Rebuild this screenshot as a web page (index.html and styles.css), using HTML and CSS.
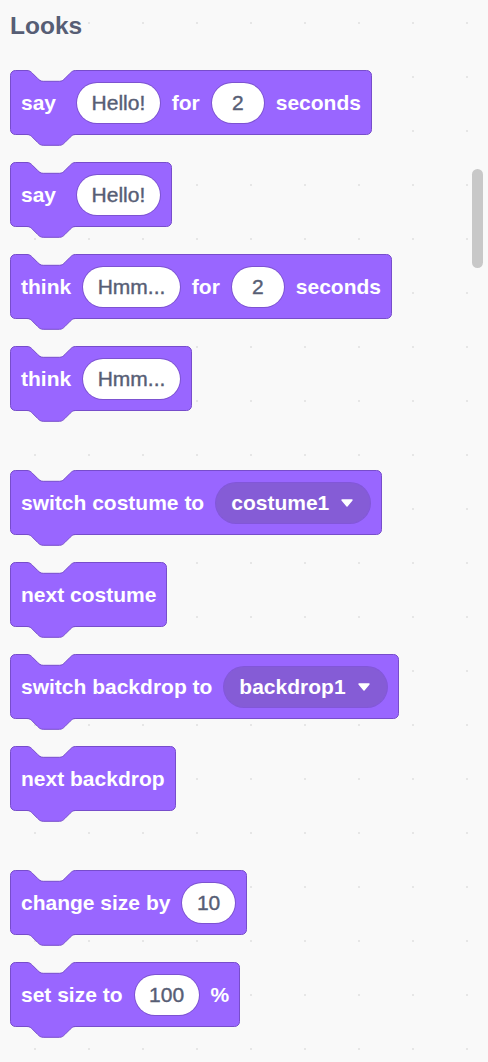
FILE: index.html
```html
<!DOCTYPE html>
<html lang="en">
<head>
<meta charset="utf-8">
<title>Looks</title>
<link rel="stylesheet" href="styles.css">
</head>
<body>
<svg class="defs" width="0" height="0" aria-hidden="true">
  <defs>
    <path id="nf" d="M1,0 V1.5 c2.7,0 4.05,1.35 5.4,2.7 l5.4,5.4 c1.35,1.35 2.7,2.7 5.4,2.7 h16.2 c2.7,0 4.05,-1.35 5.4,-2.7 l5.4,-5.4 c1.35,-1.35 2.7,-2.7 5.4,-2.7 V0 Z"/>
    <path id="nl" d="M1,1.5 c2.7,0 4.05,1.35 5.4,2.7 l5.4,5.4 c1.35,1.35 2.7,2.7 5.4,2.7 h16.2 c2.7,0 4.05,-1.35 5.4,-2.7 l5.4,-5.4 c1.35,-1.35 2.7,-2.7 5.4,-2.7"/>
    <path id="arr" d="M1,1 H11 L6,7 Z"/>
  </defs>
</svg>

<div class="flyout">
  <div class="category">Looks</div>
  <div class="stack">

    <div class="block">
      <svg class="notch top"><use class="nf" href="#nf"/><use class="nl" href="#nl"/></svg>
      <span class="label wide">say</span>
      <span class="input">Hello!</span>
      <span class="label">for</span>
      <span class="input">2</span>
      <span class="label">seconds</span>
      <svg class="notch bottom"><use class="nf" href="#nf"/><use class="nl" href="#nl"/></svg>
    </div>

    <div class="block">
      <svg class="notch top"><use class="nf" href="#nf"/><use class="nl" href="#nl"/></svg>
      <span class="label wide">say</span>
      <span class="input">Hello!</span>
      <svg class="notch bottom"><use class="nf" href="#nf"/><use class="nl" href="#nl"/></svg>
    </div>

    <div class="block">
      <svg class="notch top"><use class="nf" href="#nf"/><use class="nl" href="#nl"/></svg>
      <span class="label">think</span>
      <span class="input">Hmm...</span>
      <span class="label">for</span>
      <span class="input">2</span>
      <span class="label">seconds</span>
      <svg class="notch bottom"><use class="nf" href="#nf"/><use class="nl" href="#nl"/></svg>
    </div>

    <div class="block">
      <svg class="notch top"><use class="nf" href="#nf"/><use class="nl" href="#nl"/></svg>
      <span class="label">think</span>
      <span class="input">Hmm...</span>
      <svg class="notch bottom"><use class="nf" href="#nf"/><use class="nl" href="#nl"/></svg>
    </div>

    <div class="block group-start">
      <svg class="notch top"><use class="nf" href="#nf"/><use class="nl" href="#nl"/></svg>
      <span class="label">switch costume to</span>
      <span class="dropdown"><span>costume1</span><svg class="arrow" viewBox="0 0 12 8"><use href="#arr"/></svg></span>
      <svg class="notch bottom"><use class="nf" href="#nf"/><use class="nl" href="#nl"/></svg>
    </div>

    <div class="block">
      <svg class="notch top"><use class="nf" href="#nf"/><use class="nl" href="#nl"/></svg>
      <span class="label">next costume</span>
      <svg class="notch bottom"><use class="nf" href="#nf"/><use class="nl" href="#nl"/></svg>
    </div>

    <div class="block">
      <svg class="notch top"><use class="nf" href="#nf"/><use class="nl" href="#nl"/></svg>
      <span class="label">switch backdrop to</span>
      <span class="dropdown"><span>backdrop1</span><svg class="arrow" viewBox="0 0 12 8"><use href="#arr"/></svg></span>
      <svg class="notch bottom"><use class="nf" href="#nf"/><use class="nl" href="#nl"/></svg>
    </div>

    <div class="block">
      <svg class="notch top"><use class="nf" href="#nf"/><use class="nl" href="#nl"/></svg>
      <span class="label">next backdrop</span>
      <svg class="notch bottom"><use class="nf" href="#nf"/><use class="nl" href="#nl"/></svg>
    </div>

    <div class="block group-start">
      <svg class="notch top"><use class="nf" href="#nf"/><use class="nl" href="#nl"/></svg>
      <span class="label">change size by</span>
      <span class="input">10</span>
      <svg class="notch bottom"><use class="nf" href="#nf"/><use class="nl" href="#nl"/></svg>
    </div>

    <div class="block">
      <svg class="notch top"><use class="nf" href="#nf"/><use class="nl" href="#nl"/></svg>
      <span class="label">set size to</span>
      <span class="input">100</span>
      <span class="label">%</span>
      <svg class="notch bottom"><use class="nf" href="#nf"/><use class="nl" href="#nl"/></svg>
    </div>

  </div>
</div>

<div class="scrollbar"></div>
</body>
</html>
```

FILE: styles.css
```css
* {
  box-sizing: border-box;
}

html,
body {
  margin: 0;
  height: 100%;
}

body {
  position: relative;
  overflow: hidden;
  background-color: #f9f9f9;
  background-image: radial-gradient(circle at 35px 23px, #e6e6e6 0, #e6e6e6 0.8px, rgba(230, 230, 230, 0) 1.4px);
  background-size: 54px 54px;
  font-family: "Liberation Sans", Arial, Helvetica, sans-serif;
}

.defs {
  position: absolute;
  width: 0;
  height: 0;
}

.flyout {
  padding: 12px 0 0 10px;
}

.category {
  height: 28px;
  margin-bottom: 30px;
  font-size: 24.5px;
  line-height: 28px;
  font-weight: 700;
  color: #575e75;
}

.stack {
  display: flex;
  flex-direction: column;
  align-items: flex-start;
  gap: 27px;
}

.block {
  position: relative;
  display: flex;
  align-items: center;
  gap: 11px;
  height: 65px;
  padding: 0 10px;
  background: #9966ff;
  border: 1px solid #774dcb;
  border-radius: 5.4px;
  color: #ffffff;
  font-size: 21px;
  font-weight: 700;
  white-space: nowrap;
}

.block.group-start {
  margin-top: 32px;
}

.label.wide {
  margin-right: 9px;
}

.input {
  display: flex;
  align-items: center;
  justify-content: center;
  height: 42px;
  min-width: 54px;
  padding: 0 14.5px;
  border: 1px solid rgba(0, 0, 0, 0.18);
  border-radius: 21px;
  background: #ffffff;
  background-clip: padding-box;
  color: #575e75;
  font-size: 21px;
  font-weight: 400;
  -webkit-text-stroke: 0.4px #575e75;
}

.dropdown {
  display: flex;
  align-items: center;
  gap: 12px;
  height: 42px;
  padding: 0 17px 0 15px;
  border: 1px solid rgba(0, 0, 0, 0.15);
  border-radius: 21px;
  background: #855cd6;
  background-clip: padding-box;
  color: #ffffff;
}

.arrow {
  width: 12px;
  height: 8px;
  fill: #ffffff;
  stroke: #ffffff;
  stroke-width: 1.4;
  stroke-linejoin: round;
}

.notch {
  position: absolute;
  left: 14.7px;
  width: 51px;
  height: 14px;
  overflow: visible;
}

.notch.top {
  top: -2px;
}

.notch.bottom {
  bottom: -13px;
}

.notch.top .nf {
  fill: #f9f9f9;
}

.notch.bottom .nf {
  fill: #9966ff;
}

.nl {
  fill: none;
  stroke: #774dcb;
  stroke-width: 1;
}

.scrollbar {
  position: absolute;
  left: 472px;
  top: 169px;
  width: 11px;
  height: 99px;
  border-radius: 6px;
  background: #c8c8c8;
}
```
